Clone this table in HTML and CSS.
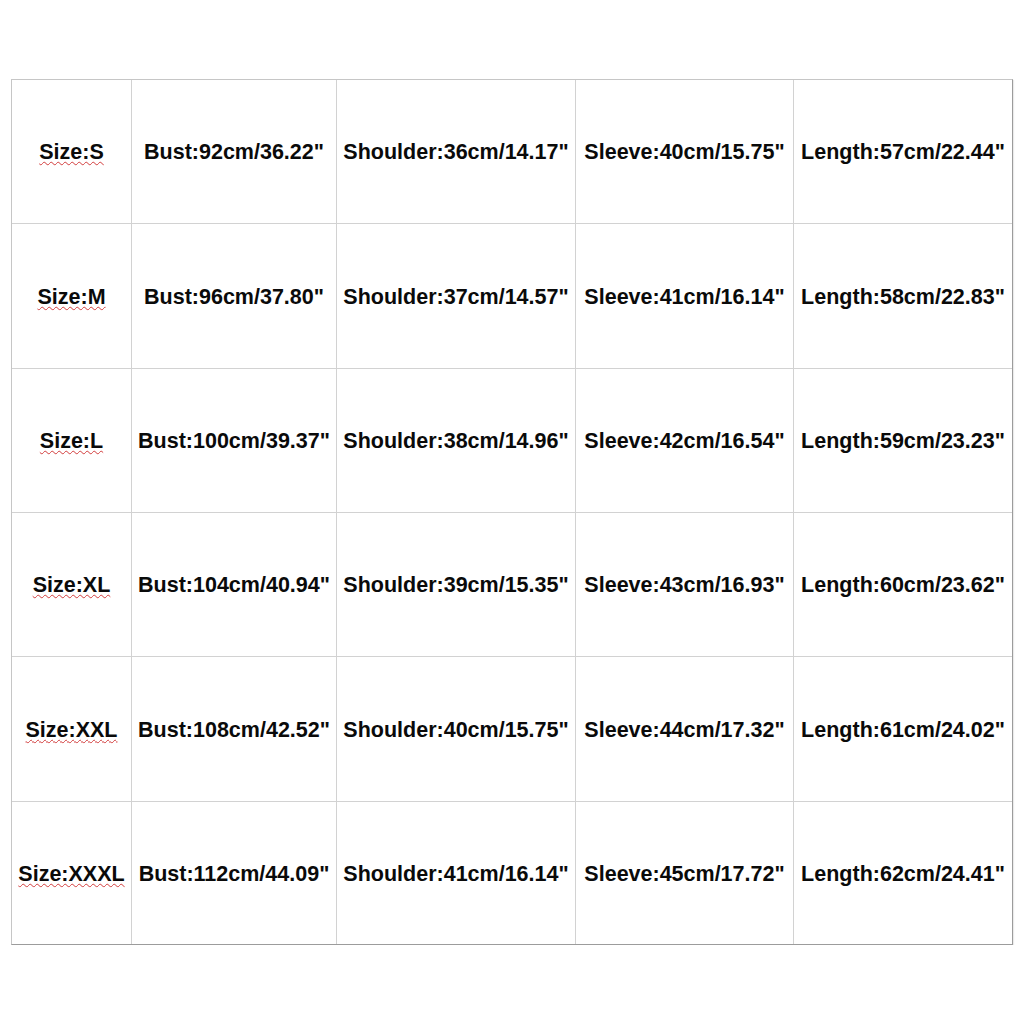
FILE: index.html
```html
<!DOCTYPE html>
<html>
<head>
<meta charset="utf-8">
<link rel="stylesheet" href="styles.css">
</head>
<body>
<div class="chart">
  <div class="cell size"><span class="wavy">Size:S</span></div>
  <div class="cell">Bust:92cm/36.22"</div>
  <div class="cell">Shoulder:36cm/14.17"</div>
  <div class="cell">Sleeve:40cm/15.75"</div>
  <div class="cell">Length:57cm/22.44"</div>

  <div class="cell size"><span class="wavy">Size:M</span></div>
  <div class="cell">Bust:96cm/37.80"</div>
  <div class="cell">Shoulder:37cm/14.57"</div>
  <div class="cell">Sleeve:41cm/16.14"</div>
  <div class="cell">Length:58cm/22.83"</div>

  <div class="cell size"><span class="wavy">Size:L</span></div>
  <div class="cell">Bust:100cm/39.37"</div>
  <div class="cell">Shoulder:38cm/14.96"</div>
  <div class="cell">Sleeve:42cm/16.54"</div>
  <div class="cell">Length:59cm/23.23"</div>

  <div class="cell size"><span class="wavy">Size:XL</span></div>
  <div class="cell">Bust:104cm/40.94"</div>
  <div class="cell">Shoulder:39cm/15.35"</div>
  <div class="cell">Sleeve:43cm/16.93"</div>
  <div class="cell">Length:60cm/23.62"</div>

  <div class="cell size"><span class="wavy">Size:XXL</span></div>
  <div class="cell">Bust:108cm/42.52"</div>
  <div class="cell">Shoulder:40cm/15.75"</div>
  <div class="cell">Sleeve:44cm/17.32"</div>
  <div class="cell">Length:61cm/24.02"</div>

  <div class="cell size"><span class="wavy">Size:XXXL</span></div>
  <div class="cell">Bust:112cm/44.09"</div>
  <div class="cell">Shoulder:41cm/16.14"</div>
  <div class="cell">Sleeve:45cm/17.72"</div>
  <div class="cell">Length:62cm/24.41"</div>
</div>
</body>
</html>
```
FILE: styles.css
```css
html, body {
  margin: 0;
  padding: 0;
  background: #ffffff;
}
body {
  padding: 79px 0 0 11px;
}
.chart {
  width: 1000px;
  display: grid;
  grid-template-columns: 119px 204px 238px 217px 218px;
  grid-template-rows: 143px 144px 143px 143px 144px 142px;
  gap: 1px;
  background: #d2d2d2;
  border: 1px solid;
  border-color: #c6c6c6 #9c9c9c #9c9c9c #c6c6c6;
  box-shadow: 1px 1px 1px rgba(0,0,0,0.08);
}
.cell {
  background: #ffffff;
  display: flex;
  align-items: center;
  justify-content: center;
  padding-top: 2px;
  font-family: "Liberation Sans", Arial, sans-serif;
  font-weight: bold;
  font-size: 21.5px;
  color: #0a0a0a;
  white-space: nowrap;
}
.wavy {
  text-decoration: underline wavy #d23c3c;
  text-decoration-thickness: 1px;
  text-underline-offset: 2px;
}
```
